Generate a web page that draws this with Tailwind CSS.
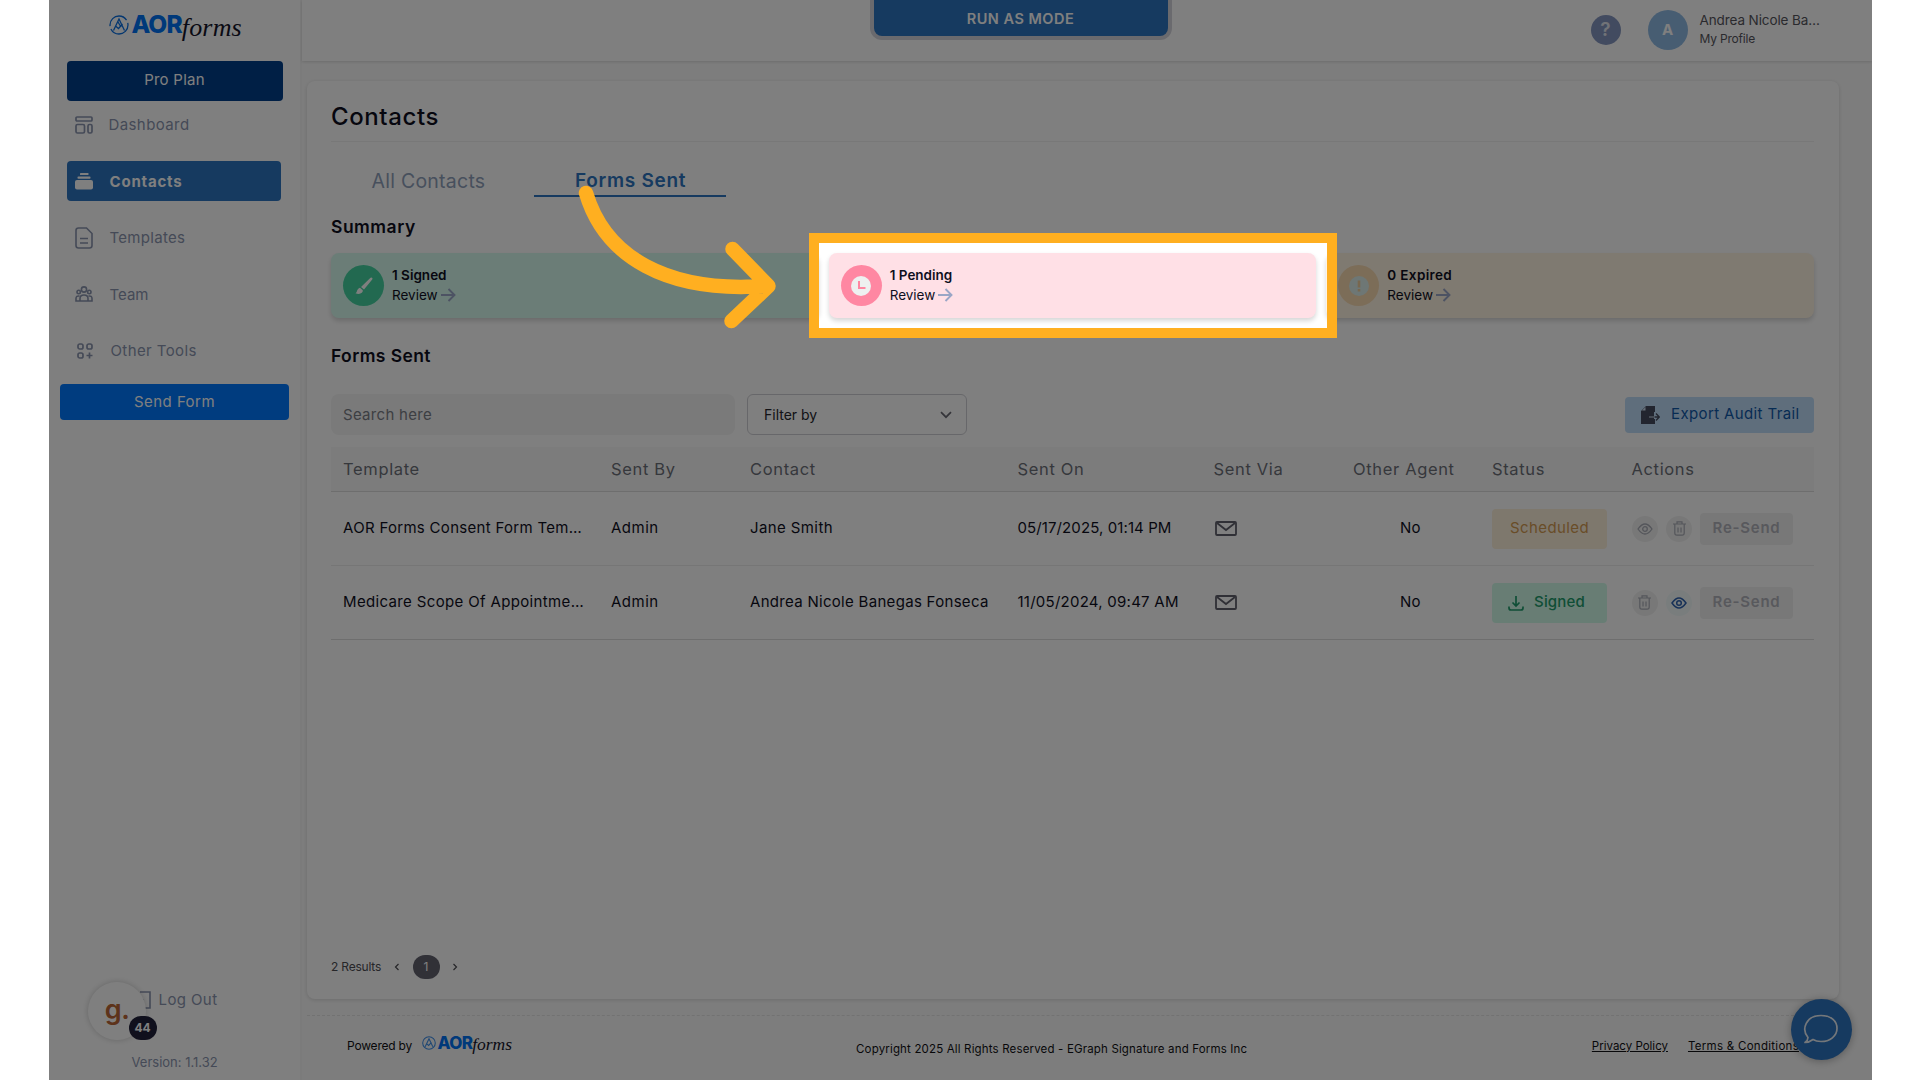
<!DOCTYPE html>
<html lang="en">
<head>
    <meta charset="UTF-8">
    <meta name="viewport" content="width=device-width, initial-scale=1.0">
    <title>Contacts - AOR Forms</title>
    <script src="https://cdn.jsdelivr.net/npm/@tailwindcss/browser@4"></script>
</head>
<body class="bg-white h-screen overflow-hidden font-['Inter',sans-serif] text-[#0f0f1e]">
<div class="relative mx-auto w-[1823px] h-[1080px] overflow-hidden flex bg-white text-[15px]">

    <!-- Sidebar -->
    <aside class="w-[253px] shrink-0 border-r-2 border-[#f6f6f6] flex flex-col text-[#8a94ae]">
        <div class="h-[60.5px] pl-[60px] pt-[9px] flex items-start">
            <svg class="w-5 h-5 mt-[6px] shrink-0" viewBox="0 0 20 20" fill="none" stroke="#0a6fe0" stroke-width="1.3"><circle cx="10" cy="10" r="9" stroke-dasharray="24 3"/><path d="M4.500 15.500L10 4l5.500 11.500M6.500 11l3 2.500 4-4.500M9 7l3 5"/></svg>
            <span class="ml-[3px] text-[24.5px] leading-[31px] font-extrabold tracking-[-0.9px] text-[#0073f5]">AOR</span>
            <span class="text-[26px] leading-[37px] italic font-['Liberation_Serif',serif] text-[#14142a] tracking-[0.2px]">forms</span>
        </div>
        <button class="ml-[18px] w-[216px] h-10 rounded bg-[#003e8a] text-white tracking-[0.25px]">Pro Plan</button>
        <nav class="mt-1 ml-[18px] w-[214px] flex flex-col gap-[16.5px]">
            <a class="h-10 flex items-center pl-2 gap-4">
                <svg class="w-[18px] h-[18px]" viewBox="0 0 18 18" fill="none" stroke="currentColor" stroke-width="1.700"><rect x="1" y="1" width="16" height="4" rx="1"/><rect x="1" y="8.500" width="8.500" height="8.500" rx="1.500"/><rect x="13" y="8.500" width="4" height="8.500" rx="1.500"/></svg>
                <span class="pt-0.5 tracking-[0.4px]">Dashboard</span>
            </a>
            <a class="h-10 flex items-center pl-2 gap-[17px] rounded bg-[#2c74c0] text-white font-bold">
                <svg class="w-[18px] h-[18px]" viewBox="0 0 18 18" fill="currentColor"><rect x="5" y="1" width="8.500" height="2" rx=".6"/><rect x="2.500" y="4.500" width="13" height="2.200" rx=".8"/><rect x="0" y="8" width="18" height="9.500" rx="2"/></svg>
                <span class="pt-0.5 tracking-[0.8px]">Contacts</span>
            </a>
            <a class="h-10 flex items-center pl-2 gap-[17px]">
                <svg class="w-[18px] h-[22px]" viewBox="0 0 18 22" fill="none" stroke="currentColor" stroke-width="1.600"><path d="M3.500 1h8L17 6.500v12q0 2.500-2.500 2.500h-11Q1 21 1 18.500v-15Q1 1 3.500 1zM5 11.500h8M5 16h8"/></svg>
                <span class="pt-0.5 tracking-[0.3px]">Templates</span>
            </a>
            <a class="h-10 flex items-center pl-2 gap-[17px]">
                <svg class="w-[18px] h-4" viewBox="0 0 18 16" fill="none" stroke="currentColor" stroke-width="1.600"><circle cx="9" cy="3.500" r="2.600"/><circle cx="3.700" cy="6" r="1.700"/><circle cx="14.300" cy="6" r="1.700"/><path d="M5 15v-2.500q0-3.500 4-3.500t4 3.500V15zM4.500 10Q1 9.500 1 12.500V15h4M13.500 10q3.500-.5 3.500 2.500V15h-4"/></svg>
                <span class="pt-0.5">Team</span>
            </a>
            <a class="h-10 flex items-center pl-2.5 gap-[18px]">
                <svg class="w-4 h-4" viewBox="0 0 16 16" fill="none" stroke="currentColor" stroke-width="1.700"><rect x="1" y="1" width="5" height="5" rx="1.800"/><rect x="10" y="1" width="5" height="5" rx="1.800"/><rect x="1" y="10" width="5" height="5" rx="1.800"/><path d="M12.500 9.500v6M9.500 12.500h6"/></svg>
                <span class="pt-0.5 tracking-[0.4px]">Other Tools</span>
            </a>
        </nav>
        <button class="mt-[13px] ml-[11.5px] w-[229px] h-[36px] rounded bg-[#0078ff] text-white tracking-[0.45px] pt-px">Send Form</button>
        <div class="mt-auto pl-[88px] h-10 flex items-center gap-2">
            <svg class="w-[14px] h-[18px]" viewBox="0 0 14 18" fill="none" stroke="currentColor" stroke-width="1.600"><path d="M3 1h10v16H5M1 5l5 4-5 4"/></svg>
            <span class="tracking-[0.4px]">Log Out</span>
        </div>
        <p class="mt-8 mb-[8px] h-[20px] pl-[83px] text-[13px] leading-5">Version: 1.1.32</p>
    </aside>

    <div class="flex-1 min-w-0 flex flex-col bg-[#fbfbfb]">
        <!-- Header -->
        <header class="h-[61px] shrink-0 bg-white shadow-[0_1px_3px_rgba(0,0,0,0.14)] flex justify-end items-start pr-[52px]">
            <span class="mt-[15px] w-[30px] h-[30px] rounded-full bg-[#8596c0] flex items-center justify-center text-[19px] font-semibold text-[#e3e6ef]">?</span>
            <span class="mt-[10px] ml-[27px] w-10 h-10 rounded-full bg-[#8fbbe4] flex items-center justify-center text-[15px] font-bold text-white">A</span>
            <div class="mt-[10px] ml-3 w-[120px] text-[#55555c]">
                <p class="text-[13.5px] leading-5 whitespace-nowrap tracking-[-0.1px]">Andrea Nicole Ba…</p>
                <p class="text-[12px] leading-[18px] tracking-[-0.2px]">My Profile</p>
            </div>
        </header>

        <!-- Content card -->
        <main class="ml-[5px] mr-[33px] mt-[20px] h-[918px] shrink-0 bg-white rounded-lg shadow-[0_1px_4px_rgba(0,0,0,0.14)] px-[24.5px] flex flex-col">
            <h1 class="h-[61px] pt-[17px] text-[24px] leading-[38px] font-medium tracking-[0.6px] border-b border-[#f0f0f0]">Contacts</h1>
            <div class="mt-[20px] flex text-[19.5px] leading-[38px]">
                <a class="w-[203px] pl-[40.500px] tracking-[0.25px] text-[#8fa0ba]">All Contacts</a>
                <a class="w-[192px] h-[35px] pl-[41px] border-b-2 border-[#2c74c0] text-[19px] tracking-[0.7px] font-semibold text-[#2c74c0]">Forms Sent</a>
            </div>
            <h2 class="mt-[12px] text-[17.5px] leading-[30px] font-semibold tracking-[0.5px]">Summary</h2>
            <div class="mt-[11px] grid grid-cols-3 gap-[10px] text-[13.5px] leading-5">
                <div class="h-[65px] rounded-lg bg-[#d6fbef] shadow-[0_3px_5px_rgba(0,0,0,0.16)] flex items-center pl-3">
                    <span class="w-[41px] h-[41px] rounded-full bg-[#44d3a0] flex items-center justify-center">
                        <svg class="w-[18px] h-[18px]" viewBox="0 0 18 18" fill="#fff"><path d="M17 .8c.8.600.5 1.300 0 2L9 12.500 6 10 15 1.200q1-1 2-.4zM5 10.800l2.800 2.500c.4 3-3.300 4.500-7.300 3 2-.8 1-4.500 4.500-5.500z"/></svg>
                    </span>
                    <div class="ml-2 -mt-px">
                        <p class="font-semibold">1 Signed</p>
                        <p class="flex items-center gap-[3px]">Review<svg class="w-[15px] h-3.5" viewBox="0 0 15 14" fill="none" stroke="#9aa6c6" stroke-width="1.900"><path d="M0 7h13M7.500 1l6 6-6 6"/></svg></p>
                    </div>
                </div>
                <div class="h-[65px] rounded-lg bg-[#ffe0e6] shadow-[0_3px_5px_rgba(0,0,0,0.16)] flex items-center pl-3">
                    <span class="w-[41px] h-[41px] rounded-full bg-[#ff87a2] flex items-center justify-center">
                        <svg class="w-5 h-5" viewBox="0 0 20 20"><circle cx="10" cy="10" r="10" fill="#eef0f0"/><path d="M8 5v7h6.500" fill="none" stroke="#ff87a2" stroke-width="2"/></svg>
                    </span>
                    <div class="ml-2 -mt-px">
                        <p class="font-semibold">1 Pending</p>
                        <p class="flex items-center gap-[3px]">Review<svg class="w-[15px] h-3.5" viewBox="0 0 15 14" fill="none" stroke="#9aa6c6" stroke-width="1.900"><path d="M0 7h13M7.500 1l6 6-6 6"/></svg></p>
                    </div>
                </div>
                <div class="h-[65px] rounded-lg bg-[#fff4e2] shadow-[0_3px_5px_rgba(0,0,0,0.16)] flex items-center pl-3">
                    <span class="w-[41px] h-[41px] rounded-full bg-[#f8dab0] flex items-center justify-center">
                        <svg class="w-5 h-5" viewBox="0 0 20 20"><circle cx="10" cy="10" r="10" fill="#dceeea"/><path d="M10 4.500v7M10 13v2.500" fill="none" stroke="#f0cf9c" stroke-width="2.600"/></svg>
                    </span>
                    <div class="ml-2 -mt-px">
                        <p class="font-semibold tracking-[0.35px]">0 Expired</p>
                        <p class="flex items-center gap-[3px]">Review<svg class="w-[15px] h-3.5" viewBox="0 0 15 14" fill="none" stroke="#9aa6c6" stroke-width="1.900"><path d="M0 7h13M7.500 1l6 6-6 6"/></svg></p>
                    </div>
                </div>
            </div>
            <h2 class="mt-[23px] text-[17.5px] leading-[30px] font-semibold tracking-[0.4px]">Forms Sent</h2>

            <div class="mt-[23px] flex items-center">
                <div class="w-[404px] h-[41px] rounded-lg bg-[#f4f4f4] pl-3 leading-[41px] tracking-[0.3px] text-[#7b7e86]">Search here</div>
                <div class="ml-3 w-[220px] h-[41px] rounded-md border border-[#cfcfd4] pl-4 pr-3.5 flex items-center justify-between text-[14px] text-[#26262e]">
                    Filter by
                    <svg class="w-3 h-2" viewBox="0 0 12 8" fill="none" stroke="#6a6a74" stroke-width="1.700"><path d="M1 1.200l5 5 5-5"/></svg>
                </div>
                <button class="ml-auto w-[189px] h-9 rounded bg-[#bfdcf8] text-[#0f58a8] tracking-[0.38px] flex items-center pl-[16px] gap-[11px] whitespace-nowrap">
                    <svg class="w-[19px] h-[18px]" viewBox="0 0 19 18"><path d="M5 0h9v6h-1v7h1v5H0V5z" fill="#454b5e"/><path d="M1 4.500L4.500 1v3.500z" fill="#cfe0f3"/><path d="M7 11h11M15 7.500l3.300 3.500-3.300 3.500" fill="none" stroke="#454b5e" stroke-width="1.300"/><path d="M8 11h6" stroke="#cfe0f3" stroke-width="1"/></svg>
                    Export Audit Trail
                </button>
            </div>

            <!-- Forms table -->
            <div class="mt-[12px]">
                <div class="h-[45px] grid grid-cols-[268px_139px_267.5px_196px_139.5px_139px_139.5px_1fr] items-center bg-[#f9f9f9] border-b border-[#dcdcdc] pl-3 text-[16.5px] text-[#6d7078] tracking-[0.65px] whitespace-nowrap">
                    <span>Template</span><span>Sent By</span><span>Contact</span><span>Sent On</span><span>Sent Via</span><span>Other Agent</span><span>Status</span><span>Actions</span>
                </div>
                <div class="h-[74px] grid grid-cols-[268px_139px_267.5px_196px_139.5px_139px_139.5px_1fr] items-center border-b border-[#ececec] pl-3 whitespace-nowrap">
                    <span class="tracking-[0.3px]">AOR Forms Consent Form Tem…</span>
                    <span class="tracking-[0.5px]">Admin</span>
                    <span class="tracking-[0.4px]">Jane Smith</span>
                    <span class="tracking-[0.1px]">05/17/2025, 01:14 PM</span>
                    <svg class="ml-[1.5px] w-[22px] h-[15px]" viewBox="0 0 22 15" fill="none" stroke="#60606c" stroke-width="1.800"><rect x="1" y="1" width="20" height="13" rx="1"/><path d="M2 2l9 7 9-7"/></svg>
                    <span class="pl-[47px] tracking-[0.3px]">No</span>
                    <span class="w-[115px] h-10 rounded bg-[#fdf0db] text-[#d39a50] tracking-[0.4px] flex items-center justify-center">Scheduled</span>
                    <div class="flex items-center">
                        <span class="w-[26px] h-[26px] rounded-full bg-[#f1f1f1] flex items-center justify-center"><svg class="w-4 h-3" viewBox="0 0 16 12" fill="none" stroke="#a9acb6" stroke-width="1.300"><path d="M1 6q7-10 14 0-7 10-14 0z"/><circle cx="8" cy="6" r="2.300"/></svg></span>
                        <span class="ml-[8.500px] w-[26px] h-[26px] rounded-full bg-[#f1f1f1] flex items-center justify-center"><svg class="w-[13px] h-[15px]" viewBox="0 0 13 15" fill="none" stroke="#a9acb6" stroke-width="1.200"><path d="M0 3h13M4 3V.8h5V3M1.800 3v9q0 2.200 2 2.200h5.400q2 0 2-2.200V3M5 6.500v5M8 6.500v5"/></svg></span>
                        <span class="ml-2 w-[93px] h-8 rounded bg-[#f1f1f1] text-[#b0b2ba] font-semibold tracking-[0.75px] flex items-center justify-center">Re-Send</span>
                    </div>
                </div>
                <div class="h-[74px] grid grid-cols-[268px_139px_267.5px_196px_139.5px_139px_139.5px_1fr] items-center border-b border-[#dcdcdc] pl-3 whitespace-nowrap">
                    <span class="tracking-[0.35px]">Medicare Scope Of Appointme…</span>
                    <span class="tracking-[0.5px]">Admin</span>
                    <span class="tracking-[0.3px]">Andrea Nicole Banegas Fonseca</span>
                    <span class="tracking-[0.25px]">11/05/2024, 09:47 AM</span>
                    <svg class="ml-[1.5px] w-[22px] h-[15px]" viewBox="0 0 22 15" fill="none" stroke="#60606c" stroke-width="1.800"><rect x="1" y="1" width="20" height="13" rx="1"/><path d="M2 2l9 7 9-7"/></svg>
                    <span class="pl-[47px] tracking-[0.3px]">No</span>
                    <span class="w-[115px] h-10 rounded bg-[#d0fbe9] text-[#1f9c6c] font-medium tracking-[0.2px] flex items-center pl-4 gap-[10px]">
                        <svg class="w-4 h-4" viewBox="0 0 16 16" fill="none" stroke="currentColor" stroke-width="1.700"><path d="M8 1v9.500M4.500 7.500L8 11l3.500-3.500M1 11.500V13q0 2 2 2h10q2 0 2-2v-1.500"/></svg>
                        Signed
                    </span>
                    <div class="flex items-center">
                        <span class="w-[26px] h-[26px] rounded-full bg-[#f1f1f1] flex items-center justify-center"><svg class="w-[13px] h-[15px]" viewBox="0 0 13 15" fill="none" stroke="#a9acb6" stroke-width="1.200"><path d="M0 3h13M4 3V.8h5V3M1.800 3v9q0 2.200 2 2.200h5.400q2 0 2-2.200V3M5 6.500v5M8 6.500v5"/></svg></span>
                        <span class="ml-[8.500px] w-[26px] h-[26px] rounded-full bg-[#f2fbfb] flex items-center justify-center"><svg class="w-4 h-3" viewBox="0 0 16 12" fill="none" stroke="#2f62b0" stroke-width="1.500"><path d="M1 6q7-10 14 0-7 10-14 0z"/><circle cx="8" cy="6" r="2.300"/></svg></span>
                        <span class="ml-2 w-[93px] h-8 rounded bg-[#f1f1f1] text-[#b0b2ba] font-semibold tracking-[0.75px] flex items-center justify-center">Re-Send</span>
                    </div>
                </div>
            </div>

            <div class="mt-auto mb-[20px] flex items-center text-[12px] text-[#4c4c52]">
                <span class="w-[62px] tracking-[-0.2px]">2 Results</span>
                <svg class="w-2 h-2" viewBox="0 0 8 8" fill="none" stroke="currentColor" stroke-width="1.200"><path d="M5.500 1L2.500 4l3 3"/></svg>
                <span class="mx-[11.5px] w-[27px] h-[24px] rounded-full bg-[#62626f] text-white flex items-center justify-center">1</span>
                <svg class="w-2 h-2" viewBox="0 0 8 8" fill="none" stroke="currentColor" stroke-width="1.200"><path d="M2.500 1l3 3-3 3"/></svg>
            </div>
        </main>

        <footer class="mt-[16px] ml-[5px] mr-[33px] flex-1 border-t border-dashed border-[#e4e4e4] text-[11.5px] text-[#101014] flex items-start whitespace-nowrap">
            <span class="ml-[40.500px] mt-[20px] text-[12px] leading-5 tracking-[-0.2px]">Powered by</span>
            <span class="ml-[9.500px] mt-[15px] flex items-start">
                <svg class="w-[14px] h-[14px] mt-[5px]" viewBox="0 0 20 20" fill="none" stroke="#3d8ee8" stroke-width="1.500"><circle cx="10" cy="10" r="9"/><path d="M4.500 15.500L10 4l5.500 11.500M6.500 11l3 2.500 4-4.500"/></svg>
                <span class="ml-[2px] text-[17px] leading-6 font-extrabold tracking-[-0.7px] text-[#0073f5]">AOR</span>
                <span class="text-[17.5px] leading-[27px] italic font-['Liberation_Serif',serif] text-[#14142a]">forms</span>
            </span>
            <span class="ml-[344px] mt-[23px] leading-5 tracking-[0.16px]">Copyright 2025 All Rights Reserved - EGraph Signature and Forms Inc</span>
            <a class="ml-auto mt-[20px] leading-5 underline">Privacy Policy</a>
            <a class="ml-[20px] mr-[39.500px] mt-[20px] leading-5 tracking-[0.28px] underline">Terms &amp; Conditions</a>
        </footer>
    </div>

    <!-- Run as banner -->
    <div class="absolute left-[821px] top-0 w-[302px] h-10 rounded-b-xl bg-[#d4d4dc] px-1 pb-1">
        <div class="h-full rounded-b-lg bg-[#2c74c0] text-white text-[14.5px] leading-[38px] text-center font-semibold tracking-[0.5px]">RUN AS MODE</div>
    </div>

    <!-- Guide badge -->
    <div class="absolute left-[39.500px] top-[982px] w-[58px] h-[58px] rounded-full bg-white shadow-[0_0_6px_rgba(0,0,0,0.2)] flex items-center justify-center text-[27px] leading-none font-semibold text-[#ba6636] pb-1 tracking-[-0.500px]">g.</div>
    <div class="absolute left-[80px] top-[1016px] w-[28px] h-[24px] rounded-full bg-[#20203a] text-white text-[12px] font-bold flex items-center justify-center">44</div>

    <!-- Chat bubble -->
    <div class="absolute left-[1742px] top-[998.500px] w-[61px] h-[61px] rounded-full bg-[#2c74c0] shadow-[0_1px_8px_rgba(0,0,0,0.3)] flex items-center justify-center">
        <svg class="w-[36px] h-[30px]" viewBox="0 0 36 30" fill="none" stroke="#e8eef5" stroke-width="1.700" stroke-linejoin="round"><path d="M5 23.500C-2 15 3 1.500 18 1.500c10 0 16 5.500 16 13s-7 13-16 13c-3.500 0-6-.7-8-2-2 1.500-5 3-8 3 2-1.500 3-3 3-5z"/></svg>
    </div>

    <!-- Spotlight: the spread shadow dims everything outside the frame -->
    <div class="absolute left-[760.500px] top-[232.500px] w-[528px] h-[105.500px] border-[10px] border-[#ffaf20] shadow-[0_0_0_2000px_rgba(0,0,0,0.5)]"></div>
    <svg class="absolute left-[520px] top-[180px] w-[220px] h-[160px]" viewBox="0 0 220 160" fill="none" stroke="#ffaf20" stroke-width="14.500" stroke-linecap="round" stroke-linejoin="round"><path d="M17 13C36 77 98 113 196 106M163.500 69l36 37-37 35"/></svg>
</div>
</body>
</html>
